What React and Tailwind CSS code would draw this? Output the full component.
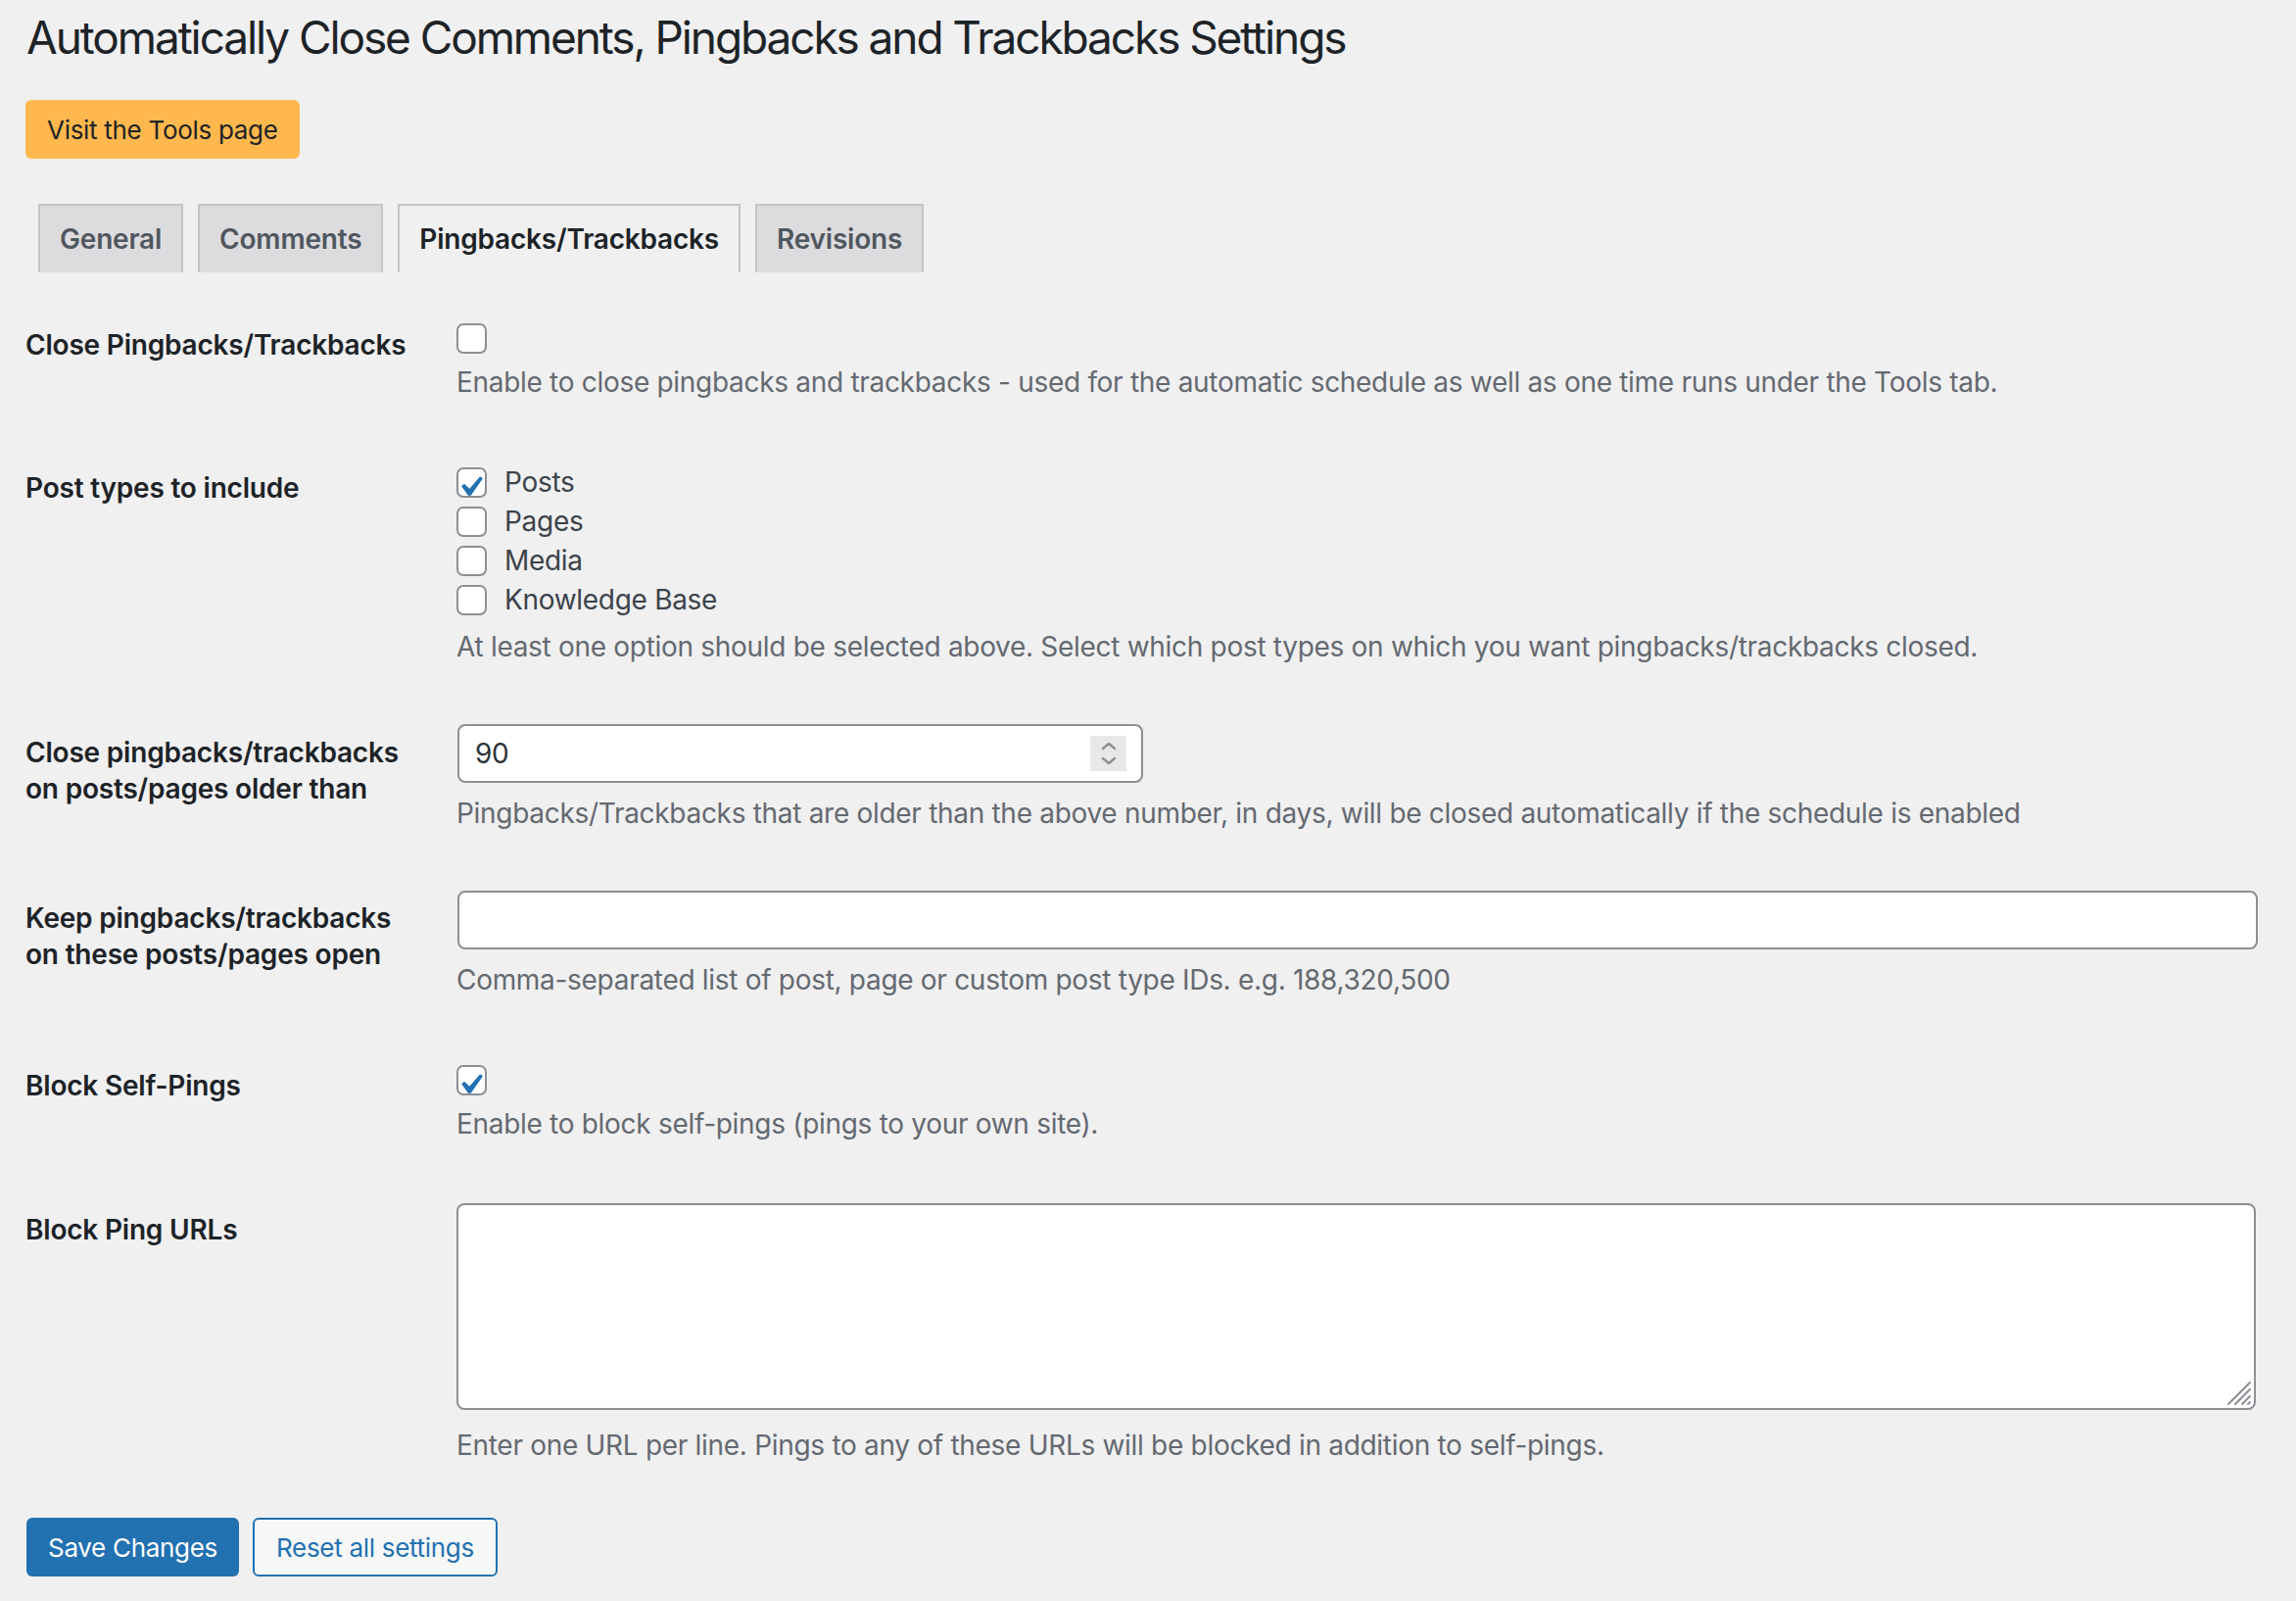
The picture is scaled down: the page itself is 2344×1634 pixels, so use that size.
import React from "react";

function Checkbox({ checked }) {
  return (
    <span className="relative block w-[31px] h-[31px] shrink-0 rounded-[7px] border-2 border-[#8c8f94] bg-white">
      {checked && (
        <svg className="absolute left-[-9px] top-[-3px] w-[42px] h-[42px]" viewBox="0 0 20 20">
          <path fill="#2271b1" d="M14.83 4.89l1.34.94-5.81 8.38H9.02L5.78 9.67l1.34-1.25 2.57 2.4z" />
        </svg>
      )}
    </span>
  );
}

function Spinner() {
  return (
    <div className="w-[37px] h-[36px] bg-[#e8e8e9] flex items-center justify-center">
      <svg width="20" height="28" viewBox="0 0 20 28" fill="none" stroke="#8c8f94" strokeWidth="2.4" strokeLinecap="round" strokeLinejoin="round">
        <path d="M4 9 L10 4 L16 9" />
        <path d="M4 19 L10 24 L16 19" />
      </svg>
    </div>
  );
}

function Tab({ label, active }) {
  return (
    <div
      className={
        active
          ? "h-[70px] px-[20px] border-2 border-b-0 border-[#c3c4c7] bg-[#f0f0f1] text-[#1d2327] text-[28px] font-semibold tracking-[-0.2px] flex items-center"
          : "h-[70px] px-[20px] border-2 border-b-0 border-[#c3c4c7] bg-[#dcdcde] text-[#50575e] text-[28px] font-semibold tracking-[-0.2px] flex items-center"
      }
    >
      {label}
    </div>
  );
}

const labelCls = "w-[440px] shrink-0 text-[28px] font-semibold leading-[37px] tracking-[-0.2px] text-[#1d2327]";
const descCls = "text-[28px] leading-[36px] text-[#646970]";

export default function App() {
  return (
    <div className="min-h-screen bg-[#f0f0f1] font-[Inter,sans-serif] tracking-[-0.3px] pl-[26px] pr-[39px] pt-[8px] pb-[25px]">
      <h1 className="text-[46px] leading-[60px] font-normal tracking-[-2.1px] text-[#1d2327] ml-[1px]">
        Automatically Close Comments, Pingbacks and Trackbacks Settings
      </h1>

      <div className="mt-[34px]">
        <button className="h-[60px] px-[22px] rounded-[6px] bg-[#ffb84d] text-[26px] text-[#1d2327] inline-flex items-center">
          Visit the Tools page
        </button>
      </div>

      <div className="mt-[46px] flex gap-[15px] pl-[13px]">
        <Tab label="General" />
        <Tab label="Comments" />
        <Tab label="Pingbacks/Trackbacks" active />
        <Tab label="Revisions" />
      </div>

      {/* Row 1 */}
      <div className="flex mt-[52px]">
        <div className={labelCls + " pt-[4px]"}>Close Pingbacks/Trackbacks</div>
        <div className="flex-1">
          <Checkbox />
          <p className={descCls + " mt-[11px]"}>
            Enable to close pingbacks and trackbacks - used for the automatic schedule as well as one time runs under the Tools tab.
          </p>
        </div>
      </div>

      {/* Row 2 */}
      <div className="flex mt-[64px]">
        <div className={labelCls + " pt-[8px]"}>Post types to include</div>
        <div className="flex-1">
          {[
            ["Posts", true],
            ["Pages", false],
            ["Media", false],
            ["Knowledge Base", false],
          ].map(([t, c]) => (
            <div key={t} className="h-[40px] flex items-center gap-[18px]">
              <Checkbox checked={c} />
              <span className="text-[28px] text-[#3c434a]">{t}</span>
            </div>
          ))}
          <p className={descCls + " mt-[10px]"}>
            At least one option should be selected above. Select which post types on which you want pingbacks/trackbacks closed.
          </p>
        </div>
      </div>

      {/* Row 3 */}
      <div className="flex mt-[61px]">
        <div className={labelCls + " pt-[11px]"}>
          Close pingbacks/trackbacks
          <br />
          on posts/pages older than
        </div>
        <div className="flex-1">
          <div className="ml-[1px] w-[700px] h-[60px] border-2 border-[#8c8f94] rounded-[8px] bg-white flex items-center justify-between pl-[16px] pr-[15px]">
            <span className="text-[28px] text-[#2c3338]">90</span>
            <Spinner />
          </div>
          <p className={descCls + " mt-[13px]"}>
            Pingbacks/Trackbacks that are older than the above number, in days, will be closed automatically if the schedule is enabled
          </p>
        </div>
      </div>

      {/* Row 4 */}
      <div className="flex mt-[61px]">
        <div className={labelCls + " pt-[10px]"}>
          Keep pingbacks/trackbacks
          <br />
          on these posts/pages open
        </div>
        <div className="flex-1">
          <div className="ml-[1px] h-[60px] border-2 border-[#8c8f94] rounded-[8px] bg-white" />
          <p className={descCls + " mt-[13px]"}>
            Comma-separated list of post, page or custom post type IDs. e.g. 188,320,500
          </p>
        </div>
      </div>

      {/* Row 5 */}
      <div className="flex mt-[69px]">
        <div className={labelCls + " pt-[3px]"}>Block Self-Pings</div>
        <div className="flex-1">
          <Checkbox checked />
          <p className={descCls + " mt-[11px]"}>Enable to block self-pings (pings to your own site).</p>
        </div>
      </div>

      {/* Row 6 */}
      <div className="flex mt-[63px]">
        <div className={labelCls + " pt-[9px]"}>Block Ping URLs</div>
        <div className="flex-1">
          <div className="relative h-[211px] mr-[2px] border-2 border-[#8c8f94] rounded-[8px] bg-white">
            <svg className="absolute right-[2px] bottom-[2px]" width="26" height="26" viewBox="0 0 26 26" stroke="#8c8f94" strokeWidth="2" strokeLinecap="round">
              <path d="M2 24 L24 2" />
              <path d="M9 24 L24 9" />
              <path d="M16 24 L24 16" />
              <path d="M22 24 L24 22" />
            </svg>
          </div>
          <p className={descCls + " mt-[18px]"}>
            Enter one URL per line. Pings to any of these URLs will be blocked in addition to self-pings.
          </p>
        </div>
      </div>

      <div className="mt-[56px] flex gap-[14px] ml-[1px]">
        <button className="h-[60px] px-[22px] rounded-[6px] bg-[#2271b1] text-white text-[26px] inline-flex items-center">
          Save Changes
        </button>
        <button className="h-[60px] px-[22px] rounded-[6px] border-2 border-[#2271b1] bg-[#f6f7f7] text-[#2271b1] text-[26px] inline-flex items-center">
          Reset all settings
        </button>
      </div>
    </div>
  );
}
